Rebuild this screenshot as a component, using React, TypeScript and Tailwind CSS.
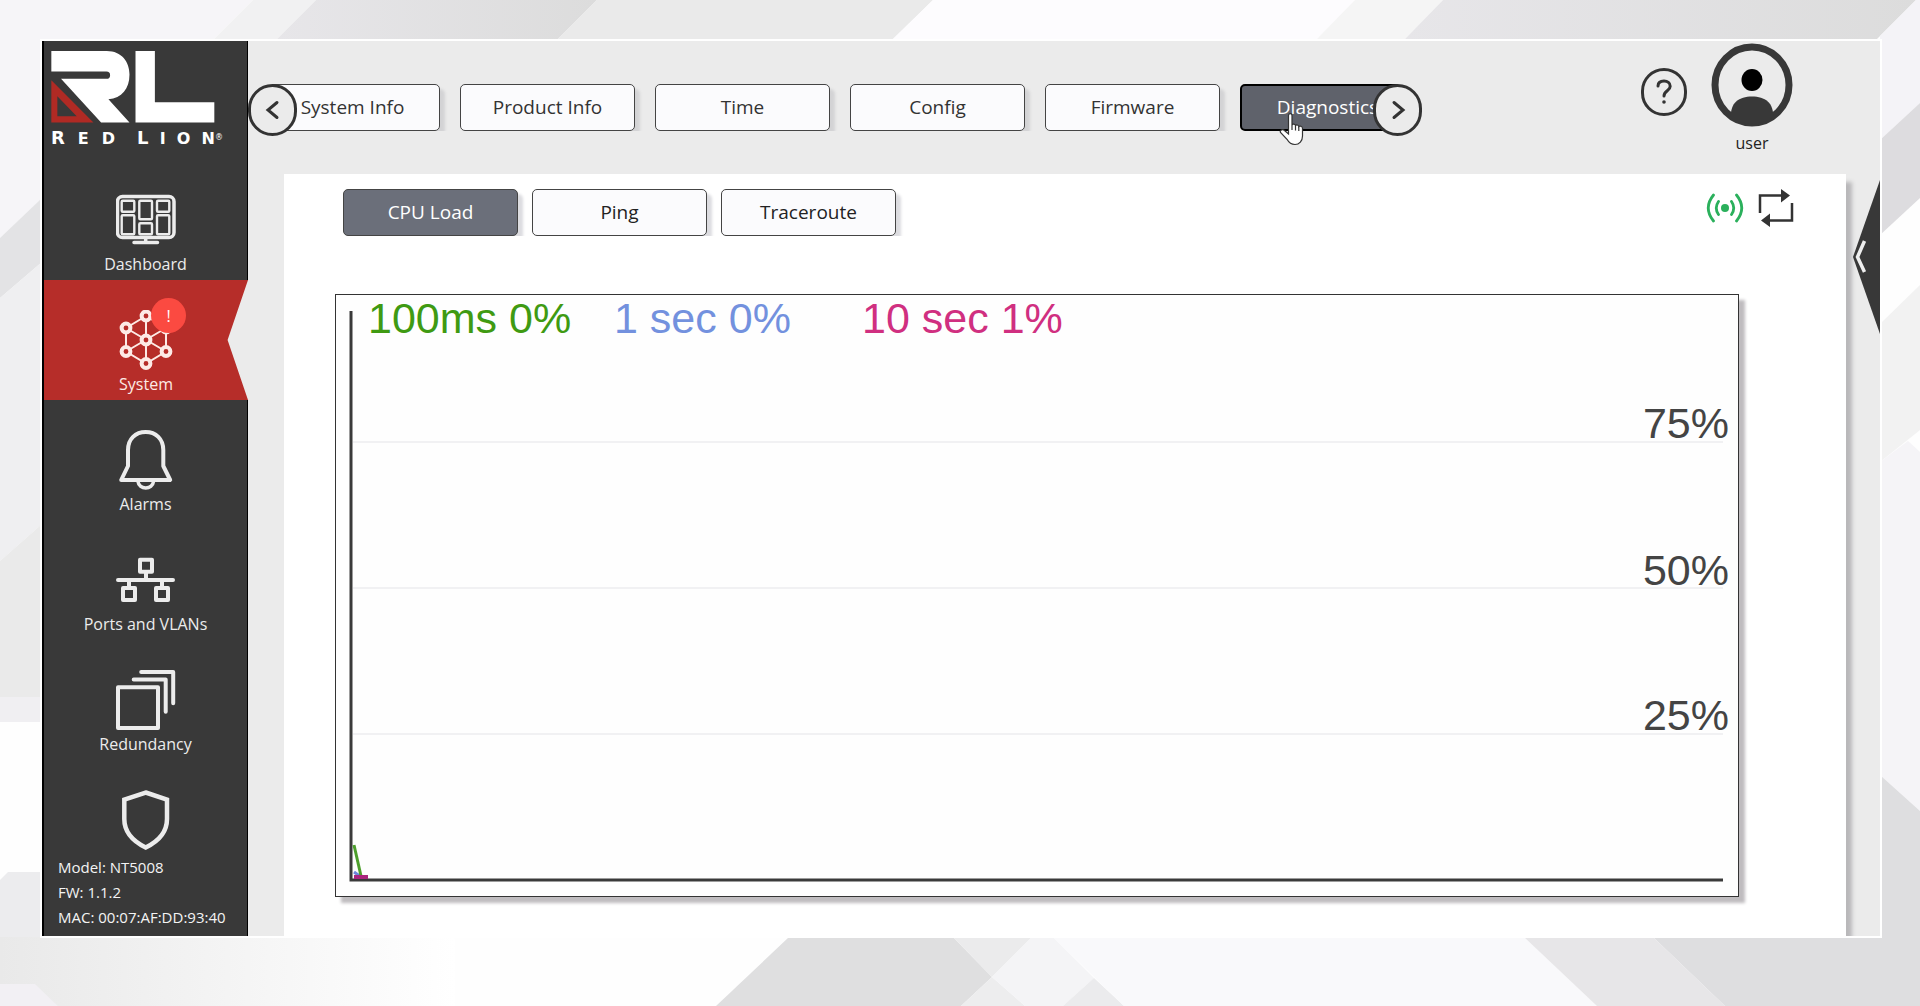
import { useState } from 'react';
import type { ReactNode } from 'react';

interface NavItem {
    id: string;
    label: string;
    icon: ReactNode;
}

const NAV_ITEMS: NavItem[] = [
    { id: 'dashboard', label: 'Dashboard', icon: <DashboardIcon /> },
    { id: 'system', label: 'System', icon: <SystemIcon /> },
    { id: 'alarms', label: 'Alarms', icon: <AlarmsIcon /> },
    { id: 'ports', label: 'Ports and VLANs', icon: <PortsIcon /> },
    { id: 'redundancy', label: 'Redundancy', icon: <RedundancyIcon /> },
];

const TABS = ['System Info', 'Product Info', 'Time', 'Config', 'Firmware', 'Diagnostics'];
const SUB_TABS = ['CPU Load', 'Ping', 'Traceroute'];

function DashboardIcon() {
    return (
        <svg viewBox="0 0 60 60" className="size-[60px]" fill="none" stroke="currentColor">
            <rect x="1.5" y="6.5" width="56.5" height="41" rx="5" strokeWidth="3.5" />
            <g strokeWidth="2.4">
                <rect x="5.7" y="10.7" width="12.6" height="11" rx="1" />
                <rect x="23.3" y="10.7" width="12.7" height="18.6" rx="1" />
                <rect x="41" y="10.7" width="12.3" height="11" rx="1" />
                <rect x="5.7" y="25.3" width="12.6" height="19" rx="1" />
                <rect x="23.3" y="33.3" width="12.7" height="11" rx="1" />
                <rect x="41" y="25.3" width="12.3" height="19" rx="1" />
            </g>
            <path d="M29.7 48v4M18 52.5h23.5" strokeWidth="3.5" strokeLinecap="round" />
        </svg>
    );
}

function SystemIcon() {
    const nodes = [[30, 6], [10, 18], [50, 18], [30, 30], [10, 41.5], [50, 41.5], [30, 53.5]];
    return (
        <svg viewBox="0 0 60 60" className="size-[60px]" fill="none" stroke="currentColor">
            <path
                d="M30 6 10 18v23.5l20 12 20-12V18ZM30 6v47.5M10 18l40 23.5M50 18 10 41.5"
                strokeWidth="2"
            />
            {nodes.map(([x, y]) => (
                <circle key={`${x}-${y}`} cx={x} cy={y} r="4.4" fill="#b62d29" strokeWidth="4" />
            ))}
        </svg>
    );
}

function AlarmsIcon() {
    return (
        <svg viewBox="0 0 60 60" className="size-[60px]" fill="none" stroke="currentColor" strokeWidth="4" strokeLinejoin="round">
            <path d="M12 36V20C12 9 19.5 2 29.7 2S47.3 9 47.3 20v16l6.9 14H5.2Z" />
            <path d="M22 51.5c1 8.5 14.5 8.5 15.5 0" strokeWidth="3.5" />
        </svg>
    );
}

function PortsIcon() {
    return (
        <svg viewBox="0 0 60 60" className="size-[60px]" fill="none" stroke="currentColor" strokeWidth="4" strokeLinejoin="round">
            <rect x="24" y="9.7" width="12" height="12" />
            <rect x="7" y="38" width="12" height="12" />
            <rect x="40" y="38" width="12" height="12" />
            <path d="M30 22v8M13 30v8M46 30v8M2 30h55" strokeLinecap="round" />
        </svg>
    );
}

function RedundancyIcon() {
    return (
        <svg viewBox="0 0 60 60" className="size-[60px]" fill="none" stroke="currentColor" strokeWidth="4" strokeLinecap="round" strokeLinejoin="round">
            <rect x="2" y="17.3" width="40" height="40.7" />
            <path d="M17.7 9.5h32v32.3M25.2 2h32v31.3" />
        </svg>
    );
}

function ShieldIcon() {
    return (
        <svg viewBox="0 0 60 60" className="size-[60px]" fill="none" stroke="currentColor" strokeWidth="4.5">
            <path d="M29.7 2.5 51 9.7V29c0 13-9 22.5-21.3 28.5C17.4 51.5 8.3 42 8.3 29V9.7Z" />
        </svg>
    );
}

function Logo() {
    return (
        <a href="#home" className="block h-[119px] pt-2 pl-[6px] text-white">
            <svg viewBox="60 56 500 224" className="h-[75px] w-[167px]" aria-hidden="true">
                <path
                    d="M64 62H230C275 62 298 95 298 132C298 175 275 203 235 206L298 276H213L93 145H229A10.5 10.5 0 0 0 229 123H64Z"
                    fill="#fff"
                />
                <path d="M316 62H374V215H552V276H316Z" fill="#fff" />
                <path d="M64 149V276H190ZM82 197 140 257H82Z" fill="#b02a24" fillRule="evenodd" />
            </svg>
            <div className="flex items-baseline gap-[22px] pl-px font-['DejaVu_Sans','Open_Sans',sans-serif] text-lg leading-7 font-bold">
                <div className="flex w-16 items-baseline justify-between">
                    <span>R</span>
                    <span className="text-base">E</span>
                    <span className="text-base">D</span>
                </div>
                <div className="flex w-[86px] items-baseline justify-between">
                    <span>L</span>
                    <span className="text-base">I</span>
                    <span className="text-base">O</span>
                    <span className="text-base">
                        N<sup className="text-[8px] font-normal">®</sup>
                    </span>
                </div>
            </div>
        </a>
    );
}

interface SideItemProps {
    item: NavItem;
    active: boolean;
    onSelect: () => void;
}

function SideItem({ item, active, onSelect }: SideItemProps) {
    const content = (
        <>
            {item.icon}
            <span className="text-base leading-7">{item.label}</span>
        </>
    );

    if (!active) {
        return (
            <button onClick={onSelect} className="flex h-[120px] w-full shrink-0 flex-col items-center pt-[30px] text-[#ececec]">
                {content}
            </button>
        );
    }

    return (
        <div className="-mr-px shrink-0 bg-[#ebebeb]">
            <button
                onClick={onSelect}
                className="relative flex h-[120px] w-full flex-col items-center bg-[#b62d29] pt-[30px] text-[#fdeae6] [clip-path:polygon(0_0,100%_0,90%_50%,100%_100%,0_100%)]"
            >
                {content}
                <span className="absolute top-[18px] left-[107px] flex size-[35px] items-center justify-center rounded-full bg-[#fb4a41] text-base text-white">
                    !
                </span>
            </button>
        </div>
    );
}

function ScrollButton({ direction }: { direction: 'left' | 'right' }) {
    return (
        <button
            aria-label={`Scroll ${direction}`}
            className="relative z-10 flex h-[52px] w-[49px] shrink-0 items-center justify-center rounded-full border-3 border-[#333] bg-[#ebebeb] text-[#333]"
        >
            <svg viewBox="0 0 20 20" className="size-5" fill="none" stroke="currentColor" strokeWidth="3" strokeLinecap="round">
                <path d={direction === 'left' ? 'M14 2.5 5 10l9 7.5' : 'M6 2.5 15 10l-9 7.5'} />
            </svg>
        </button>
    );
}

function Pointer() {
    return (
        <svg viewBox="0 0 26 34" className="pointer-events-none absolute top-7 right-[117px] z-20 h-[34px] w-[26px]">
            <path
                d="M9.5 3.5C9.5 1 13 1 13 3.5V13c.5-1.5 3.3-1.2 3.5.7.6-1.2 3.1-.9 3.3 1 .9-1.1 3.5-.5 3.7 1.5V24c0 5-3.2 8.5-7.5 8.5-4 0-6.200-2-8-5.200L1.500 20.500C.5 18.500 3.500 16.500 5.500 18.500L9.500 22Z"
                fill="#fff"
                stroke="#333"
                strokeWidth="1.2"
            />
            <path d="M13 13v5M16.500 14v4.500M19.800 15v4" stroke="#333" strokeWidth="1.2" />
        </svg>
    );
}

function CpuChart() {
    return (
        <svg viewBox="0 0 1402 601" className="block h-auto w-full font-['Liberation_Sans',Arial,sans-serif] text-[43px]">
            <path d="M17 147H1387M17 293H1387M17 439H1387" stroke="#f1f1f3" strokeWidth="2" />
            <g fill="#444" textAnchor="end">
                <text x="1393" y="143">75%</text>
                <text x="1393" y="290">50%</text>
                <text x="1393" y="435">25%</text>
            </g>
            <text x="32" y="38" fill="#3f9a12">100ms 0%</text>
            <text x="278" y="38" fill="#7391de">1 sec 0%</text>
            <text x="526" y="38" fill="#d02f80">10 sec 1%</text>
            <path d="M15 16V585H1387" fill="none" stroke="#3a3a3a" strokeWidth="3" />
            <path d="M18 577 25 582" stroke="#6d86dc" strokeWidth="3" />
            <path d="M18 550 25 581" stroke="#4d9f2c" strokeWidth="3" />
            <path d="M18 582H32" stroke="#a9267d" strokeWidth="4" />
        </svg>
    );
}

function Backdrop() {
    return (
        <svg
            viewBox="0 0 1920 1006"
            preserveAspectRatio="none"
            className="absolute inset-0 -z-10 size-full"
            aria-hidden="true"
        >
            <defs>
                <linearGradient id="fade">
                    <stop offset="0" stopColor="#e9e9e9" />
                    <stop offset="1" stopColor="#fff" />
                </linearGradient>
                <linearGradient id="steel">
                    <stop offset="0" stopColor="#e7e6e9" />
                    <stop offset="1" stopColor="#dcdcdc" />
                </linearGradient>
            </defs>
            <rect width="1920" height="1006" fill="#fefefe" />

            {/* top */}
            <path d="M0 0H253L214 39 40 200 0 238Z" fill="#f6f5f8" />
            <path d="M253 0H316L277 39H214Z" fill="#f1f1f2" />
            <path d="M316 0H597L558 39H277Z" fill="url(#steel)" />
            <path d="M597 0H933L893 39H558Z" fill="#eaeaea" />
            <path d="M933 0H1355L1317 39H893Z" fill="#fdfcfe" />
            <path d="M1355 0H1443L1405 39H1317Z" fill="#f5f5f5" />
            <path d="M1443 0H1916L1877 39H1405Z" fill="url(#steel)" />

            {/* left */}
            <path d="M0 238 42 198V262L0 298Z" fill="#e3e3e5" />
            <path d="M0 298 42 262V524L0 561Z" fill="#efeff1" />
            <path d="M0 561 42 524V697H0Z" fill="#eaeaea" />
            <path d="M0 697H42V722H0Z" fill="#f0eff2" />
            <path d="M0 880 8 872H42V937H0Z" fill="#ececee" />

            {/* right */}
            <path d="M1916 0H1920V103L1880 140V36Z" fill="#f4f3f7" />
            <path d="M1880 140 1920 103V198L1880 235Z" fill="#dddcdf" />
            <path d="M1880 324 1920 285V430L1880 462Z" fill="#f2f2f2" />
            <path d="M1880 462 1908 441 1920 452V811L1880 775Z" fill="#f5f4f7" />
            <path d="M1880 775 1920 811V1006H1725L1653 937H1880Z" fill="#dedee0" />

            {/* bottom */}
            <path d="M0 937H455V1006H0Z" fill="url(#fade)" />
            <path d="M0 984H35L58 1006H0Z" fill="#f2f0f4" />
            <path d="M789 937H953L992 977 961 1006H716Z" fill="#dfdfe0" />
            <path d="M953 937H1032L992 977Z" fill="#ebebec" />
            <path d="M961 1006 992 977 1025 1006Z" fill="#ededee" />
            <path d="M1032 937H1053L1094 978 1063 1006H1025L992 977Z" fill="#f4f4f6" />
            <path d="M1063 1006 1094 978 1124 1006Z" fill="#ebebed" />
            <path d="M1053 937H1524L1597 1006H1124Z" fill="#f9f9fb" />
            <path d="M1524 937H1653L1725 1006H1597Z" fill="#e7e6e8" />
        </svg>
    );
}

export default function App() {
    const [section, setSection] = useState('system');
    const [tab, setTab] = useState('Diagnostics');
    const [subTab, setSubTab] = useState('CPU Load');

    return (
        <div className="relative isolate flex h-screen pt-[39px] pr-[38px] pb-[68px] pl-10 font-['Open_Sans','Noto_Sans',sans-serif]">
            <Backdrop />
            <div className="flex min-w-0 flex-1 overflow-hidden border-2 border-white bg-[#ebebeb]">
                {/* Sidebar */}
                <aside className="flex w-[206px] shrink-0 flex-col border-r border-l-2 border-black bg-[#393939]">
                    <Logo />
                    <nav className="flex flex-col">
                        {NAV_ITEMS.map(item => (
                            <SideItem
                                key={item.id}
                                item={item}
                                active={item.id === section}
                                onSelect={() => setSection(item.id)}
                            />
                        ))}
                        <button
                            aria-label="Security"
                            className="flex shrink-0 justify-center pt-[30px] text-[#ececec]"
                            onClick={() => setSection('security')}
                        >
                            <ShieldIcon />
                        </button>
                    </nav>
                    <div className="mt-[5px] shrink-0 pl-[14px] text-[15px] leading-[25px] whitespace-nowrap text-[#f4f4f4]">
                        <p>Model: NT5008</p>
                        <p>FW: 1.1.2</p>
                        <p>MAC: 00:07:AF:DD:93:40</p>
                    </div>
                </aside>

                <div className="flex min-w-0 flex-1 flex-col">
                    {/* Header */}
                    <header className="flex h-[133px] shrink-0 justify-between pr-[87px]">
                        <div className="relative flex max-w-[1174px] min-w-0 flex-1 items-start pt-[43px]">
                            <ScrollButton direction="left" />
                            <div className="-mx-6 min-w-0 flex-1 overflow-hidden">
                                <div className="-ml-2 flex gap-5">
                                    {TABS.map(name => (
                                        <button
                                            key={name}
                                            onClick={() => setTab(name)}
                                            className={`h-[47px] w-[175px] shrink-0 rounded-[5px] text-[19px] ${
                                                name === tab
                                                    ? 'border-2 border-black bg-[#5f626b] text-white'
                                                    : 'border border-[#444] bg-[#fbfbfd] text-[#333] shadow-[5px_5px_3px_#d3d3d5]'
                                            }`}
                                        >
                                            {name}
                                        </button>
                                    ))}
                                </div>
                            </div>
                            <div className="relative">
                                <ScrollButton direction="right" />
                                <Pointer />
                            </div>
                        </div>
                        <div className="flex items-start gap-6">
                            <button
                                aria-label="Help"
                                className="mt-[27px] flex h-12 w-[46px] items-center justify-center rounded-full border-3 border-[#333] text-[#333]"
                            >
                                <svg viewBox="0 0 20 26" className="h-[26px] w-5" fill="none" stroke="currentColor" strokeWidth="3" strokeLinecap="round">
                                    <path d="M4 7C4 3.5 6.5 2 10 2s6.2 1.800 6.200 5.200C16.200 12 10 11.500 10 17" />
                                    <circle cx="10" cy="23" r="1.8" fill="currentColor" stroke="none" />
                                </svg>
                            </button>
                            <button className="flex flex-col items-center pt-[2px]">
                                <svg viewBox="0 0 82 84" className="h-[84px] w-[82px]">
                                    <ellipse cx="41" cy="42" rx="37" ry="38" fill="none" stroke="#383838" strokeWidth="7" />
                                    <path d="M20 74C19 60 28 53.5 41 53.5S63 60 62 74Q53 81 41 81T20 74Z" fill="#383838" />
                                    <ellipse cx="41" cy="37" rx="10.5" ry="11" />
                                </svg>
                                <span className="text-base leading-8 text-[#222]">user</span>
                            </button>
                        </div>
                    </header>

                    <div className="flex min-h-0 flex-1 pl-9">
                        {/* Content */}
                        <main className="min-w-0 flex-1 bg-white shadow-[6px_8px_4px_#b9b8ba]">
                            <div className="flex items-start justify-between pt-[15px] pr-[52px] pl-[59px]">
                                <div className="flex gap-[14px] overflow-hidden pr-2">
                                    {SUB_TABS.map(name => (
                                        <button
                                            key={name}
                                            onClick={() => setSubTab(name)}
                                            className={`h-[47px] w-[175px] rounded-[5px] border border-[#444] text-[19px] shadow-[5px_5px_3px_#dcdce0] ${
                                                name === subTab ? 'bg-[#6b6f7a] text-white' : 'bg-[#fbfbfd] text-[#222]'
                                            }`}
                                        >
                                            {name}
                                        </button>
                                    ))}
                                </div>
                                <div className="flex items-center gap-[14px]">
                                    <svg viewBox="0 0 38 30" className="h-[30px] w-[38px]" fill="none" stroke="#2bb05c" strokeWidth="2.8" strokeLinecap="round">
                                        <circle cx="19" cy="15" r="4" fill="#2bb05c" stroke="none" />
                                        <path d="M12.5 8.5q-4.5 6.5 0 13M25.5 8.5q4.5 6.5 0 13M7.5 2q-10.5 13 0 26M30.5 2q10.5 13 0 26" />
                                    </svg>
                                    <button aria-label="Refresh">
                                        <svg viewBox="0 0 36 38" className="h-[38px] w-9" fill="none" stroke="#333" strokeWidth="2.5">
                                            <path d="M2 24V6.5H25M34 14V31.5H10" />
                                            <path d="M23 0 32 6.5 23 13.5ZM12 24.5 3 31.5 12 38Z" fill="#333" stroke="none" />
                                        </svg>
                                    </button>
                                </div>
                            </div>
                            <div className="mt-[58px] mr-[107px] ml-[51px] border border-[#333] bg-[#fefefe] shadow-[6px_6px_3px_#bfbcbf]">
                                <CpuChart />
                            </div>
                        </main>

                        {/* Drawer handle */}
                        <div className="flex w-[34px] shrink-0 items-start justify-end pt-[6px]">
                            <button aria-label="Open side panel" className="relative">
                                <svg viewBox="0 0 27 154" className="h-[154px] w-[27px]">
                                    <path d="M27 0V154L0 77Z" fill="#383838" />
                                    <path d="M11.5 61 4.5 77 11.5 92" fill="none" stroke="#eee" strokeWidth="3.5" />
                                </svg>
                            </button>
                        </div>
                    </div>
                </div>
            </div>
        </div>
    );
}
